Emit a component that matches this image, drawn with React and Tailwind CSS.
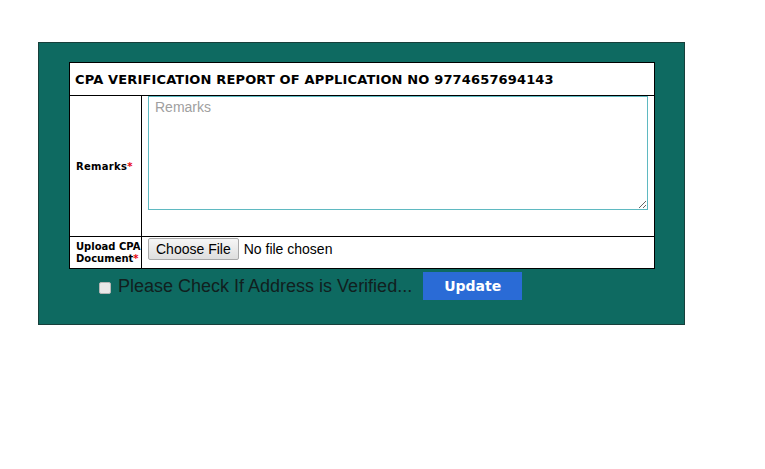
export default function App() {
  return (
    <div className="w-[765px] h-[469px] bg-white relative" style={{ fontFamily: '"Liberation Sans", Arial, sans-serif' }}>
      <div className="absolute left-[38px] top-[42px] w-[647px] h-[283px] bg-[#0e6a61] border border-[#173f3b] pl-[30px] pt-[19px]">
        <div className="w-[586px] bg-white border border-black">
          <div className="h-[33px] border-b border-black flex items-center pl-[5px] pt-[1px] font-bold text-[13px] tracking-[0.15px] text-black" style={{ fontFamily: '"DejaVu Sans", Verdana, sans-serif' }}>
            CPA VERIFICATION REPORT OF APPLICATION NO 9774657694143
          </div>
          <div className="flex h-[141px] border-b border-black">
            <div className="w-[72px] border-r border-black flex items-center pl-[6px] text-[10px] tracking-[0.3px] font-bold text-black" style={{ fontFamily: '"DejaVu Sans", Verdana, sans-serif' }}>
              <span>Remarks<span className="text-red-600">*</span></span>
            </div>
            <div className="flex-1 pl-[6px] pt-0">
              <textarea placeholder="Remarks" className="w-[500px] h-[114px] border border-[#5fb9c1] px-[6px] py-0 text-[14px] placeholder:text-[#a0a0a0] outline-none" style={{ fontFamily: '"Liberation Sans", Arial, sans-serif' }} />
            </div>
          </div>
          <div className="flex h-[31px]">
            <div className="w-[72px] border-r border-black flex items-center pl-[6px] text-[10px] leading-[12px] font-bold text-black" style={{ fontFamily: '"DejaVu Sans", Verdana, sans-serif' }}>
              <span>Upload CPA<br />Document<span className="text-red-600">*</span></span>
            </div>
            <div className="flex-1 flex items-start pl-[6px] pt-[1px] text-[14px]">
              <button className="h-[22px] px-[7px] border border-[#a9a9a9] rounded-[2px] bg-gradient-to-b from-[#f6f6f6] to-[#dedede] text-black text-[14px]">Choose File</button>
              <span className="ml-[5px] leading-[22px] text-black">No file chosen</span>
            </div>
          </div>
        </div>
        <div className="flex items-center mt-[3px] ml-[30px]">
          <span className="w-[12px] h-[12px] bg-[#e8e8e8] border border-[#b5b5b5] rounded-[2px] mt-[3px]"></span>
          <span className="ml-[7px] text-[18px] text-[#11201e]">Please Check If Address is Verified...</span>
          <button className="ml-[11px] w-[99px] h-[28px] bg-[#2a6bd6] text-white font-bold text-[14px]" style={{ fontFamily: '"DejaVu Sans", Verdana, sans-serif' }}>Update</button>
        </div>
      </div>
    </div>
  );
}
